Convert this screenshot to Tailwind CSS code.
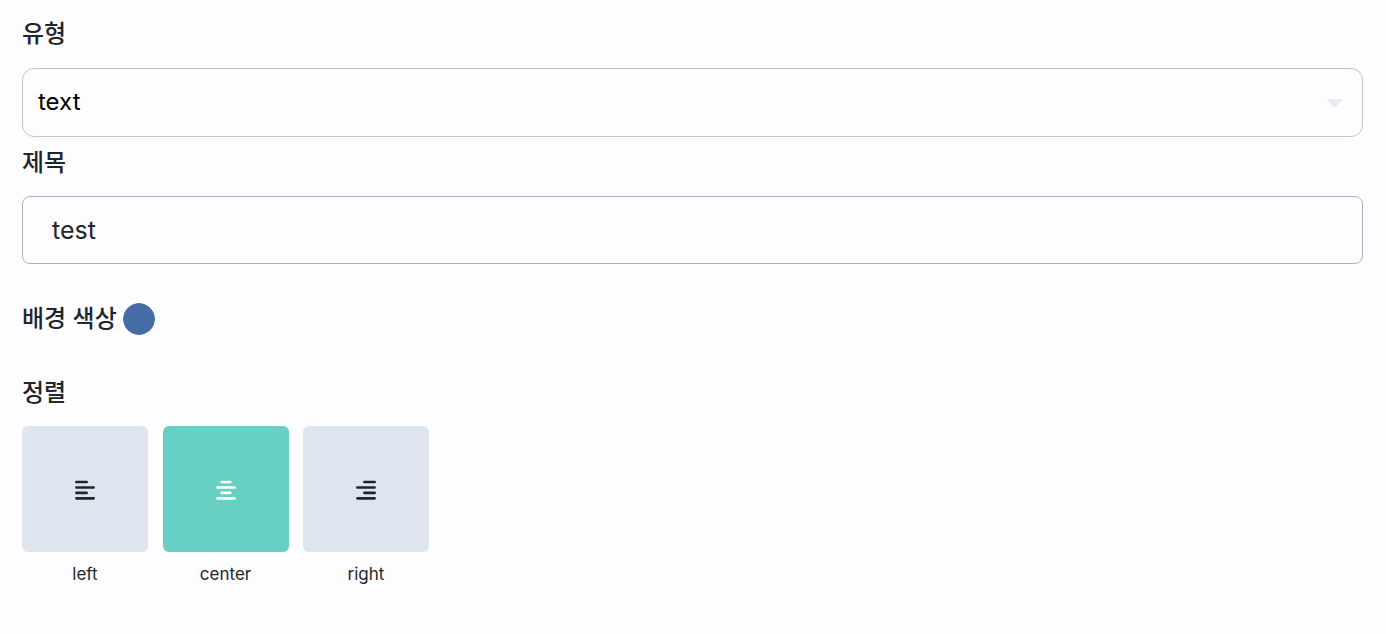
<!DOCTYPE html>
<html lang="ko">
<head>
    <meta charset="UTF-8">
    <meta name="viewport" content="width=device-width, initial-scale=1.0">
    <title>텍스트 설정</title>
    <script src="https://cdn.jsdelivr.net/npm/@tailwindcss/browser@4"></script>
</head>
<body class="bg-[#fdfdff] font-['Inter','Noto_Sans_CJK_KR',sans-serif] text-2xl text-[#1f262d]">
    <form class="flex flex-col pl-[22px] pr-[23px] pt-4">
        <!-- Type -->
        <label for="type" class="font-medium leading-9">유형</label>
        <div class="relative mt-4">
            <select id="type" class="block h-[69px] w-full appearance-none rounded-xl border border-[#c4c4c9] bg-transparent px-[15px] pb-0.5 text-black outline-none">
                <option selected>text</option>
            </select>
            <svg class="pointer-events-none absolute right-5 top-[31px] h-[9px] w-4" viewBox="0 0 16 9" fill="#e9e9f5">
                <path d="M1 0h13c1 0 1.300.9.7 1.500L8.300 8.200a1.100 1.100 0 0 1-1.600 0L.3 1.500C-.3.900 0 0 1 0z"/>
            </svg>
        </div>

        <!-- Title -->
        <label for="title" class="mt-2 font-medium leading-9">제목</label>
        <input id="title" type="text" value="test" class="mt-[15px] h-[68px] w-full rounded-lg border border-[#abb5c0] bg-transparent px-[29px] text-[25px] outline-none">

        <!-- Background color -->
        <div class="mt-[37px] flex items-center gap-1.5">
            <label for="background" class="font-medium leading-9">배경 색상</label>
            <input id="background" type="color" value="#456ca5" class="size-8 appearance-none rounded-full bg-transparent [&::-webkit-color-swatch-wrapper]:p-0 [&::-webkit-color-swatch]:rounded-full [&::-webkit-color-swatch]:border-0">
        </div>

        <!-- Alignment -->
        <fieldset class="mt-[38px]">
            <legend class="font-medium leading-9">정렬</legend>
            <div class="mt-[15px] flex w-[407px] justify-between text-[17px] leading-7">
                <label class="relative flex w-[126px] flex-col items-center gap-2">
                    <input type="radio" name="align" value="left" class="peer sr-only">
                    <span class="flex size-[126px] items-center justify-center rounded-md bg-[#dee5ee] peer-checked:bg-[#68cfc3] peer-checked:text-white">
                        <svg class="mt-px h-5 w-5" viewBox="0 0 20 20" fill="none" stroke="currentColor" stroke-width="2.7" stroke-linecap="round">
                            <path d="M1.400 2h10.200M1.400 7.500h17.200M1.400 12.900h10.200M1.400 18.300h17.200"/>
                        </svg>
                    </span>
                    <span>left</span>
                </label>
                <label class="relative flex w-[126px] flex-col items-center gap-2">
                    <input type="radio" name="align" value="center" class="peer sr-only" checked>
                    <span class="flex size-[126px] items-center justify-center rounded-md bg-[#dee5ee] peer-checked:bg-[#68cfc3] peer-checked:text-white">
                        <svg class="mt-px h-5 w-5" viewBox="0 0 20 20" fill="none" stroke="currentColor" stroke-width="2.7" stroke-linecap="round">
                            <path d="M5.700 2h8.600M1.400 7.500h17.200M5.700 12.900h8.600M1.400 18.300h17.200"/>
                        </svg>
                    </span>
                    <span>center</span>
                </label>
                <label class="relative flex w-[126px] flex-col items-center gap-2">
                    <input type="radio" name="align" value="right" class="peer sr-only">
                    <span class="flex size-[126px] items-center justify-center rounded-md bg-[#dee5ee] peer-checked:bg-[#68cfc3] peer-checked:text-white">
                        <svg class="mt-px h-5 w-5" viewBox="0 0 20 20" fill="none" stroke="currentColor" stroke-width="2.7" stroke-linecap="round">
                            <path d="M8.400 2h10.200M1.400 7.500h17.200M8.400 12.900h10.200M1.400 18.300h17.200"/>
                        </svg>
                    </span>
                    <span>right</span>
                </label>
            </div>
        </fieldset>
    </form>
</body>
</html>
